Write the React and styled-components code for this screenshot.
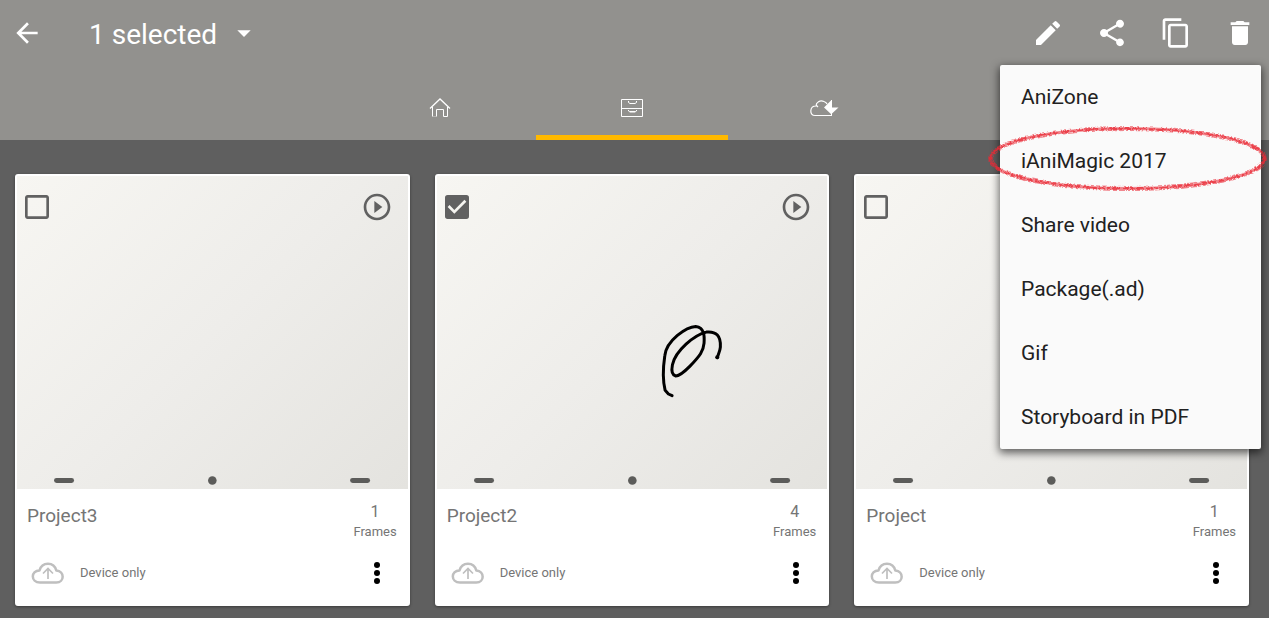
import { useState } from "react";
import styled, { createGlobalStyle, ThemeProvider } from "styled-components";
import {
  MdArrowBack,
  MdArrowDropDown,
  MdCheckBox,
  MdCheckBoxOutlineBlank,
  MdContentCopy,
  MdDelete,
  MdEdit,
  MdPlayCircleOutline,
  MdShare,
} from "react-icons/md";

const theme = {
  colors: {
    header: "#92918e",
    page: "#5f5f5f",
    accent: "#ffb900",
    text: "#757575",
    icon: "#616161",
    menu_text: "#212121",
  },
};

const GlobalStyle = createGlobalStyle`
  * {
    box-sizing: border-box;
  }
  body {
    margin: 0;
    background: ${theme.colors.page};
    font-family: Roboto, "Liberation Sans", sans-serif;
  }
  button {
    margin: 0;
    padding: 0;
    border: none;
    background: none;
    color: inherit;
    font: inherit;
    cursor: pointer;
  }
  svg {
    display: block;
  }
`;

const Header = styled.header`
  position: relative;
  z-index: 1;
  background: ${(props) => props.theme.colors.header};
  color: white;
`;

const Toolbar = styled.div`
  display: flex;
  align-items: center;
  height: 66px;
  padding: 0 13px 0 11px;
`;

const SelectionButton = styled.button`
  display: flex;
  align-items: center;
  gap: 11px;
  margin-left: 46px;
  font-size: 28px;
  line-height: 32px;
`;

const SelectionText = styled.span`
  padding-top: 4px;
`;

const Actions = styled.div`
  display: flex;
  gap: 32px;
  margin-left: auto;
`;

const Tabs = styled.nav`
  display: flex;
  justify-content: center;
  padding: 10px 20px 0 15px;
`;

const Tab = styled.a`
  display: flex;
  align-items: center;
  justify-content: center;
  width: 192px;
  height: 64px;
  color: white;
  box-shadow: ${(props) =>
    props.$active ? `inset 0 -5px ${props.theme.colors.accent}` : "none"};
`;

const Menu = styled.ul`
  position: absolute;
  top: 65px;
  right: 8px;
  width: 261px;
  margin: 0;
  padding: 0;
  list-style: none;
  background: #fafafa;
  border-radius: 2px;
  box-shadow: 0 3px 8px 1px rgba(0, 0, 0, 0.6);
`;

const MenuItem = styled.li`
  position: relative;
`;

const MenuButton = styled.button`
  width: 100%;
  height: 64px;
  padding: 0 21px;
  text-align: left;
  font-size: 21px;
  color: ${(props) => props.theme.colors.menu_text};
`;

const Highlight = styled.svg`
  position: absolute;
  top: -5px;
  left: -13px;
  width: 282px;
  height: 68px;
  overflow: visible;
  pointer-events: none;
`;

const ProjectGrid = styled.main`
  display: grid;
  grid-template-columns: repeat(3, 1fr);
  gap: 25px;
  padding: 34px 20px 12px 15px;
`;

const Card = styled.article`
  background: white;
  border: 2px solid white;
  border-radius: 3px;
  box-shadow: 0 1px 3px rgba(0, 0, 0, 0.4);
  color: ${(props) => props.theme.colors.text};
`;

const Thumbnail = styled.div`
  position: relative;
  aspect-ratio: 5 / 4;
  background: linear-gradient(135deg, #f7f6f2 0%, #eeedea 50%, #e4e3df 100%);
`;

const Drawing = styled.svg`
  width: 100%;
  height: 100%;
`;

const ThumbnailBar = styled.div`
  position: absolute;
  top: 15px;
  left: 4px;
  right: 15px;
  display: flex;
  justify-content: space-between;
  color: ${(props) => props.theme.colors.icon};
`;

const CheckLabel = styled.label`
  position: relative;
  cursor: pointer;
  input {
    position: absolute;
    inset: 0;
    width: 100%;
    height: 100%;
    margin: 0;
    opacity: 0;
    cursor: pointer;
  }
`;

const CardRow = styled.div`
  display: flex;
  align-items: ${(props) => (props.$top ? "flex-start" : "center")};
  justify-content: space-between;
  height: ${(props) => (props.$top ? "60px" : "48px")};
  padding: ${(props) => (props.$top ? "13px 11px 0 10px" : "0 27px 0 14px")};
  margin-bottom: ${(props) => (props.$top ? "0" : "7px")};
`;

const ProjectName = styled.h2`
  margin: 0;
  font-size: 19px;
  font-weight: 400;
  line-height: 28px;
`;

const Frames = styled.div`
  display: flex;
  flex-direction: column;
  align-items: center;
  font-size: 13px;
  line-height: 20px;
`;

const FrameCount = styled.span`
  font-size: 16px;
`;

const Storage = styled.div`
  display: flex;
  align-items: center;
  gap: 15px;
  font-size: 13px;
`;

const projects = [
  { id: 1, name: "Project3", frames: 1 },
  { id: 2, name: "Project2", frames: 4, scribble: true },
  { id: 3, name: "Project", frames: 1 },
];

const menuItems = [
  "AniZone",
  "iAniMagic 2017",
  "Share video",
  "Package(.ad)",
  "Gif",
  "Storyboard in PDF",
];

const HomeIcon = () => (
  <svg width="22" height="20" fill="none" stroke="currentColor">
    <path d="M1 10.500 11 1l10 9.500" strokeWidth="1.300" />
    <path d="M3.500 9v9.500M7.500 18.500v-7h7v7h4V9" />
    <path d="M4 18.500h3" opacity=".3" />
  </svg>
);

const DrawerIcon = () => (
  <svg width="24" height="20" fill="none" stroke="currentColor">
    <path d="M1.500 1.500h21v17h-21zM1.500 10.500h21" />
    <path d="M8.500 3v1.500l1.500 1h5l1.500-1V3M8.500 12v1l1.500 1h5l1.500-1v-1" />
    <path d="M10 13.500h5" />
  </svg>
);

const CloudTabIcon = () => (
  <svg width="30" height="20" fill="none" stroke="currentColor">
    <path
      d="M23 17.500H6C0 17.500.5 8 7 8c0-4 4-6 8-4.500 1.500.5 2.500 1 3 2.500M7 7l2 2"
      strokeWidth="1.200"
    />
    <path d="M15 9.500 22.500 2v14.500z" fill="currentColor" stroke="none" />
    <path d="M22.500 2v16" />
    <path d="M23 9.500h6.500L23 15.500z" fill="currentColor" stroke="none" />
  </svg>
);

const CloudUploadIcon = () => (
  <svg width="34" height="24" fill="none" stroke="#bfbfbf">
    <path
      d="M9 21.500C-.5 21.500-.5 9.500 8.500 9.500 11 .5 23 .5 25.300 9.500c8.500.5 8.500 12 0 12z"
      strokeWidth="2.500"
      strokeLinejoin="round"
    />
    <path d="M17 18V8M12 12.500 17 7.500l5 5" strokeWidth="1.700" />
  </svg>
);

const DotsIcon = () => (
  <svg width="8" height="24" fill="black">
    <circle cx="4" cy="4" r="3" />
    <circle cx="4" cy="12" r="3" />
    <circle cx="4" cy="20" r="3" />
  </svg>
);

function ProjectCard({ project, checked, onToggle }) {
  const { name, frames, scribble } = project;
  return (
    <Card>
      <Thumbnail>
        <Drawing viewBox="0 0 391 313">
          <g fill="#5c5c5a">
            <rect x="37" y="302.500" width="20" height="5" rx="2.500" />
            <circle cx="195.500" cy="305" r="4.300" />
            <rect x="333.500" y="302.500" width="20" height="5" rx="2.500" />
          </g>
          {scribble && (
            <path
              transform="translate(203 134) scale(.3333)"
              d="M97 258 86 253 76 242C67 205 71 165 75 138 80 92 140 51 168 50c28 3 26 32 25 50-2 24-12 38-43 70-20 20-32 29-42 29-14-4-12-24-10-34 9-42 66-90 102-98 30-3 44 12 42 45-1 12-6 20-9 32"
              fill="none"
              stroke="black"
              strokeWidth="9"
              strokeLinecap="round"
              strokeLinejoin="round"
            />
          )}
          {scribble && <circle cx="280.500" cy="181.500" r="2" />}
        </Drawing>
        <ThumbnailBar>
          <CheckLabel>
            <input
              type="checkbox"
              aria-label={name}
              checked={checked}
              onChange={onToggle}
            />
            {checked ? (
              <MdCheckBox size={32} />
            ) : (
              <MdCheckBoxOutlineBlank size={32} />
            )}
          </CheckLabel>
          <button aria-label="Play">
            <MdPlayCircleOutline size={32} />
          </button>
        </ThumbnailBar>
      </Thumbnail>
      <CardRow $top>
        <ProjectName>{name}</ProjectName>
        <Frames>
          <FrameCount>{frames}</FrameCount>
          Frames
        </Frames>
      </CardRow>
      <CardRow>
        <Storage>
          <CloudUploadIcon />
          Device only
        </Storage>
        <button aria-label="More">
          <DotsIcon />
        </button>
      </CardRow>
    </Card>
  );
}

function App() {
  const [selected, setSelected] = useState([2]);
  const handleToggle = (id) => {
    setSelected(
      selected.includes(id)
        ? selected.filter((item) => item !== id)
        : [...selected, id]
    );
  };
  return (
    <ThemeProvider theme={theme}>
      <GlobalStyle />
      <Header>
        <Toolbar>
          <button aria-label="Back">
            <MdArrowBack size={32} />
          </button>
          <SelectionButton>
            <SelectionText>{selected.length} selected</SelectionText>
            <MdArrowDropDown size={32} />
          </SelectionButton>
          <Actions>
            <button aria-label="Edit">
              <MdEdit size={32} />
            </button>
            <button aria-label="Share">
              <MdShare size={32} />
            </button>
            <button aria-label="Copy">
              <MdContentCopy size={32} />
            </button>
            <button aria-label="Delete">
              <MdDelete size={32} />
            </button>
          </Actions>
        </Toolbar>
        <Tabs>
          <Tab href="#home" aria-label="Home">
            <HomeIcon />
          </Tab>
          <Tab href="#projects" aria-label="Projects" $active>
            <DrawerIcon />
          </Tab>
          <Tab href="#cloud" aria-label="Cloud">
            <CloudTabIcon />
          </Tab>
        </Tabs>
        <Menu>
          {menuItems.map((item) => (
            <MenuItem key={item}>
              <MenuButton>{item}</MenuButton>
              {item === "iAniMagic 2017" && (
                <Highlight fill="none" stroke="#ea2a35">
                  <filter id="rough" x="-5%" y="-10%" width="110%" height="120%">
                    <feTurbulence baseFrequency="0.3" numOctaves="2" />
                    <feDisplacementMap
                      in="SourceGraphic"
                      scale="2"
                      xChannelSelector="R"
                      yChannelSelector="G"
                    />
                  </filter>
                  <g filter="url(#rough)">
                    <ellipse
                      cx="140"
                      cy="34"
                      rx="137"
                      ry="30"
                      strokeWidth="4"
                      opacity=".55"
                    />
                    <ellipse
                      cx="140"
                      cy="34"
                      rx="137"
                      ry="30"
                      strokeWidth="2"
                      strokeDasharray="6 2 9 1 4 2"
                      opacity=".75"
                    />
                  </g>
                </Highlight>
              )}
            </MenuItem>
          ))}
        </Menu>
      </Header>
      <ProjectGrid>
        {projects.map((project) => (
          <ProjectCard
            key={project.id}
            project={project}
            checked={selected.includes(project.id)}
            onToggle={() => handleToggle(project.id)}
          />
        ))}
      </ProjectGrid>
    </ThemeProvider>
  );
}

export default App;
